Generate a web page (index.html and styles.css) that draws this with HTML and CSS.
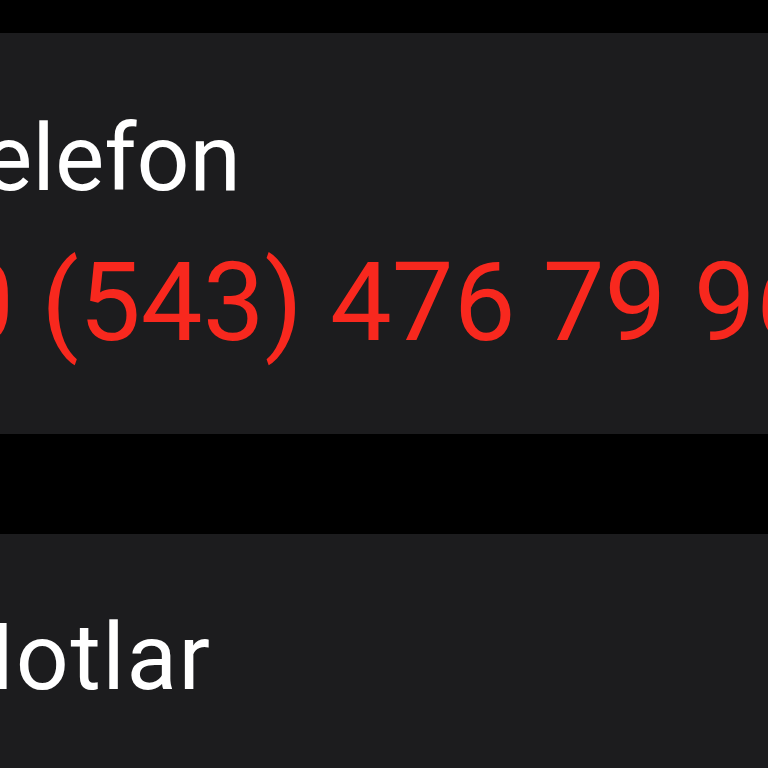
FILE: index.html
```html
<!DOCTYPE html>
<html lang="tr">
<head>
<meta charset="utf-8">
<link rel="stylesheet" href="styles.css">
</head>
<body>
<div class="screen">
  <section class="card card-phone">
    <div class="label"><span class="shift-label">Telefon</span></div>
    <div class="phone"><span class="shift-phone">+90 (543) 476 79 96</span></div>
  </section>
  <div class="gap"></div>
  <section class="card card-notes">
    <div class="label"><span class="shift-notes">Notlar</span></div>
  </section>
</div>
</body>
</html>
```
FILE: styles.css
```css
html, body {
  margin: 0;
  padding: 0;
  background: #000;
  overflow: hidden;
}
.screen {
  width: 768px;
  height: 768px;
  overflow: hidden;
  padding-top: 33px;
  box-sizing: border-box;
  font-family: "Roboto", "Liberation Sans", sans-serif;
}
.card {
  background: #1c1c1e;
  overflow: hidden;
  white-space: nowrap;
}
.card-phone {
  height: 401px;
  padding-top: 71px;
  box-sizing: border-box;
}
.gap {
  height: 100px;
  background: #000;
}
.card-notes {
  height: 300px;
  padding-top: 69px;
  box-sizing: border-box;
}
.label {
  color: #ffffff;
  font-size: 93px;
  line-height: 110px;
}
.phone {
  color: #f8281e;
  font-size: 110px;
  line-height: 130px;
  margin-top: 24px;
}
.shift-label {
  display: inline-block;
  margin-left: -68px;
}
.shift-phone {
  display: inline-block;
  margin-left: -172px;
}
.shift-notes {
  display: inline-block;
  margin-left: -52px;
  letter-spacing: 1.5px;
}
```
